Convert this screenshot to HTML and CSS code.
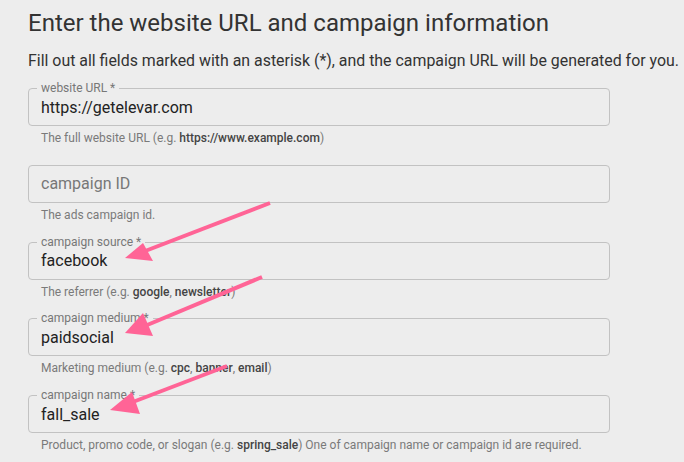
FILE: index.html
```html
<!DOCTYPE html>
<html>
<head>
<meta charset="utf-8">
<link rel="stylesheet" href="styles.css">
</head>
<body>
<div class="page">
  <h1 class="title">Enter the website URL and campaign information</h1>
  <p class="intro">Fill out all fields marked with an asterisk (*), and the campaign URL will be generated for you.</p>

  <div class="field">
    <div class="box"><span class="label">website URL *</span><span class="value">https://getelevar.com</span></div>
    <div class="help">The full website URL (e.g. <b>https://www.example.com</b>)</div>
  </div>

  <div class="field">
    <div class="box"><span class="placeholder">campaign ID</span></div>
    <div class="help">The ads campaign id.</div>
  </div>

  <div class="field">
    <div class="box"><span class="label">campaign source *</span><span class="value">facebook</span></div>
    <div class="help">The referrer (e.g. <b>google</b>, <b>newsletter</b>)</div>
  </div>

  <div class="field">
    <div class="box"><span class="label">campaign medium *</span><span class="value">paidsocial</span></div>
    <div class="help">Marketing medium (e.g. <b>cpc</b>, <b>banner</b>, <b>email</b>)</div>
  </div>

  <div class="field">
    <div class="box"><span class="label">campaign name *</span><span class="value">fall_sale</span></div>
    <div class="help">Product, promo code, or slogan (e.g. <b>spring_sale</b>) One of campaign name or campaign id are required.</div>
  </div>

  <svg class="arrows" width="684" height="462" viewBox="0 0 684 462">
    <g stroke="#ff6496" stroke-width="4" stroke-linecap="butt" fill="#ff6496">
      <line x1="270" y1="203" x2="140" y2="253"/>
      <polygon points="125,258 143,243 153,261" stroke="none"/>
      <line x1="262" y1="277" x2="140" y2="328"/>
      <polygon points="125,333 143,313 153,336" stroke="none"/>
      <line x1="227" y1="366" x2="125" y2="405"/>
      <polygon points="110,410 132,392 140,414" stroke="none"/>
    </g>
  </svg>
</div>
</body>
</html>
```

FILE: styles.css
```css
html, body {
  margin: 0;
  padding: 0;
  background: #ededed;
}
.page {
  position: relative;
  width: 684px;
  height: 462px;
  overflow: hidden;
  padding: 0 0 0 28px;
  box-sizing: border-box;
  font-family: Roboto, "Liberation Sans", sans-serif;
  color: #333;
}
.title {
  margin: 0;
  padding-top: 8px;
  font-size: 24px;
  font-weight: 400;
  line-height: 30px;
  color: #333;
  white-space: nowrap;
}
.intro {
  margin: 13px 0 0 0;
  font-size: 15.9px;
  line-height: 20px;
  color: #333;
  white-space: nowrap;
}
.field {
  width: 582px;
}
.intro + .field {
  margin-top: 17px;
}
.box {
  position: relative;
  height: 38px;
  box-sizing: border-box;
  border: 1px solid #c2c2c2;
  border-radius: 4px;
  display: flex;
  align-items: center;
  padding: 0 12px;
}
.label {
  position: absolute;
  top: -8px;
  left: 8px;
  padding: 0 4px;
  background: #ededed;
  font-size: 12px;
  line-height: 14px;
  color: #777;
}
.value {
  font-size: 16px;
  color: #222;
}
.placeholder {
  font-size: 16px;
  color: #777;
}
.help {
  margin: 5px 0 18.75px 13px;
  font-size: 12px;
  line-height: 15px;
  color: #7a7a7a;
  white-space: nowrap;
}
.help b {
  font-weight: 500;
  color: #444;
}
.arrows {
  position: absolute;
  left: 0;
  top: 0;
  pointer-events: none;
}
```
